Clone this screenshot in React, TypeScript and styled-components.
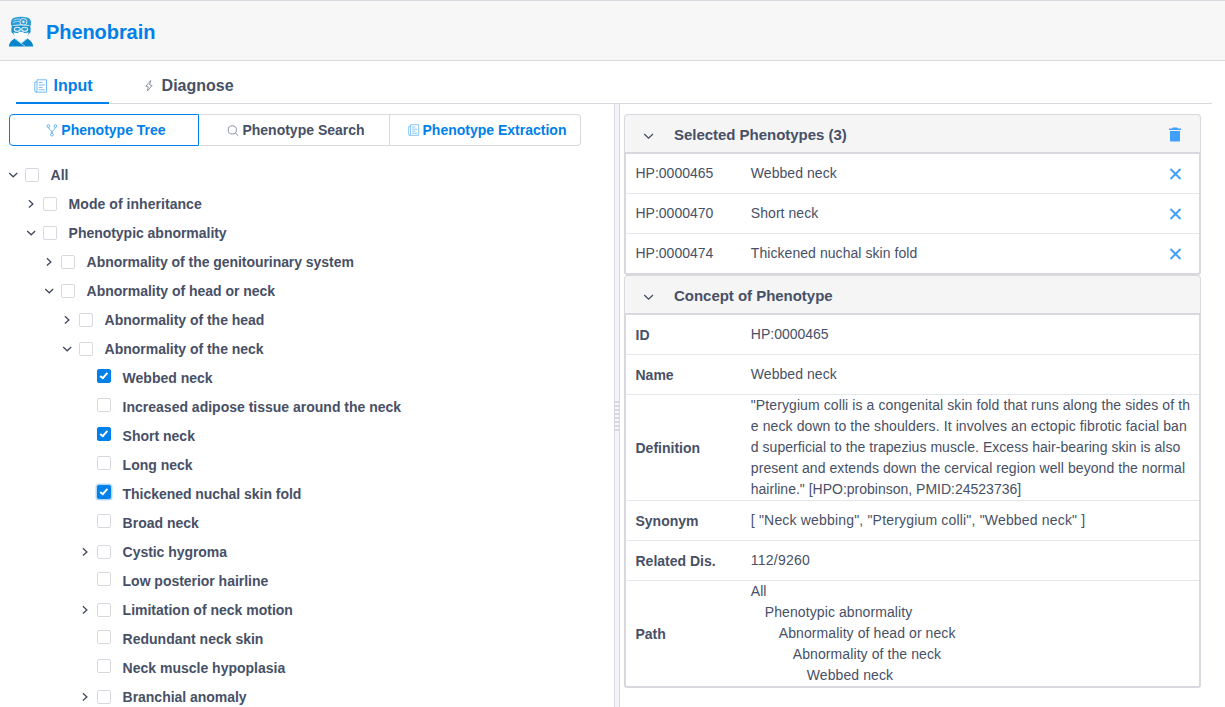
import React from "react";
import styled, { createGlobalStyle, css } from "styled-components";

const ink = "#475066";
const blue = "#0080ea";
const line = "#d8d8de";

const Global = createGlobalStyle`
  * { box-sizing: border-box; }
  body { margin: 0; background: #fff; overflow: hidden; }
`;

const Page = styled.div`
  width: 1225px;
  height: 707px;
  overflow: hidden;
  display: flex;
  flex-direction: column;
  font-family: "Liberation Sans", Arial, sans-serif;
  font-size: 14px;
  line-height: 21px;
  color: ${ink};
`;

const Header = styled.header`
  flex: none;
  height: 61px;
  padding: 2px 0 0 8px;
  display: flex;
  align-items: center;
  gap: 12px;
  background: #f7f7f7;
  border-top: 1px solid ${line};
  border-bottom: 1px solid ${line};
`;

const Brand = styled.h1`
  margin: 0;
  font-size: 20px;
  line-height: 24px;
  font-weight: 700;
  letter-spacing: -0.07px;
  color: ${blue};
`;

const Tabs = styled.nav`
  flex: none;
  display: flex;
  height: 43px;
  margin: 0 13px 0 16px;
  border-bottom: 1px solid ${line};
`;

const Tab = styled.div<{ $active?: boolean }>`
  height: 43px;
  padding: 8px 16.5px 0 17.5px;
  margin-right: 16px;
  display: flex;
  align-items: center;
  gap: 6px;
  font-size: 16px;
  font-weight: 700;
  color: ${(p) => (p.$active ? blue : ink)};
  border-bottom: 2px solid ${(p) => (p.$active ? blue : "transparent")};
`;

const Split = styled.main`
  flex: 1;
  display: flex;
  min-height: 0;
`;

const Left = styled.section`
  width: 614px;
  flex: none;
  padding: 10px 33px 0 9px;
  overflow: hidden;
`;

const Divider = styled.div`
  width: 6px;
  flex: none;
  display: flex;
  flex-direction: column;
  padding-top: 297px;
  background: #f5f5f7;
  border-left: 1px solid ${line};
  border-right: 1px solid ${line};
`;

const Grip = styled.div`
  height: 30px;
  background: repeating-linear-gradient(${line} 0 2px, #f7f7f8 2px 4px);
`;

const Segments = styled.div`
  display: flex;
  height: 32px;
`;

const Segment = styled.div<{ $active?: boolean; $blue?: boolean }>`
  width: 191px;
  padding-left: 4px;
  display: flex;
  align-items: center;
  justify-content: center;
  gap: 3px;
  font-weight: 700;
  color: ${(p) => (p.$active || p.$blue ? blue : ink)};
  border: 1px solid ${line};
  border-left: 0;
  &:last-child { border-radius: 0 4px 4px 0; }
  ${(p) => p.$active && css`
    width: 190px;
    border: 1px solid ${blue};
    border-radius: 4px 0 0 4px;
  `}
`;

const Tree = styled.div`
  padding-top: 14px;
`;

const Row = styled.div<{ $depth: number }>`
  height: 29px;
  display: flex;
  align-items: center;
  padding-left: ${(p) => p.$depth * 18}px;
`;

const Caret = styled.span`
  width: 17px;
  margin-left: -1px;
  display: flex;
  align-items: center;
`;

const Box = styled.span<{ $on?: boolean; $focus?: boolean; $leaf?: boolean }>`
  width: 14px;
  height: 14px;
  margin: ${(p) => (p.$leaf ? "0 11.6px 4px 0" : "0 11.6px 0 0")};
  border: 1px solid ${(p) => (p.$on ? blue : line)};
  border-radius: 2px;
  background: ${(p) => (p.$on ? blue : "#fff")};
  box-shadow: ${(p) => (p.$focus ? "0 0 0 1.5px #b3d9f9" : "none")};
  display: flex;
`;

const Label = styled.span<{ $ls?: number }>`
  font-weight: 700;
  white-space: nowrap;
  letter-spacing: ${(p) => p.$ls ?? 0}px;
  ${Row} & { padding-top: 2px; }
`;

const Right = styled.section`
  flex: 1;
  min-width: 0;
  padding: 10px 24px 0 4px;
`;

const PanelHead = styled.div`
  height: 38px;
  display: flex;
  align-items: center;
  padding: 2px 18px 0 18px;
  background: #f5f5f6;
  border: 1px solid ${line};
  border-bottom: 0;
  border-radius: 4px 4px 0 0;
`;

const PanelTitle = styled.h2`
  flex: 1;
  margin: 0 0 0 19px;
  font-size: 15px;
  line-height: 20px;
  font-weight: 700;
  letter-spacing: -0.03px;
`;

const Table = styled.div`
  border: 2px solid ${line};
  border-radius: 0 0 3px 3px;
`;

const TableRow = styled.div`
  min-height: 39px;
  display: flex;
  align-items: center;
  padding: 0 17px 0 9.5px;
  & + & { border-top: 1px solid #e3e6ea; min-height: 40px; }
`;

const Key = styled.div<{ $bold?: boolean }>`
  width: 115.3px;
  flex: none;
  padding-top: ${(p) => (p.$bold ? "2px" : "0")};
  font-weight: ${(p) => (p.$bold ? 700 : 400)};
`;

const Value = styled.div`
  flex: 1;
  min-width: 0;
  display: flex;
  flex-direction: column;
  letter-spacing: 0.06px;
`;

const TextLine = styled.div<{ $indent?: number; $ls?: number }>`
  white-space: pre;
  padding-left: ${(p) => p.$indent ?? 0}px;
  letter-spacing: ${(p) => p.$ls ?? 0.06}px;
`;

const Chevron = ({ open }: { open: boolean }) => (
  <svg width="12" height="12" viewBox="0 0 12 12" fill="none" stroke="#3f495c" strokeWidth="1.3">
    <path d={open ? "M1.2 4.1 5.2 7.8 9.2 4.1" : "M2.9 2.2 6.9 5.9 2.9 9.6"} />
  </svg>
);

const PanelChevron = () => (
  <svg width="12" height="12" viewBox="0 0 12 12" fill="none" stroke="#3f495c" strokeWidth="1.2">
    <path d="M1.2 5 5.6 9.2 10 5" />
  </svg>
);

const DocIcon = ({ size }: { size: number }) => (
  <svg width={size} height={size} viewBox="0 0 14 14" fill="none" stroke="#66b3f2" strokeWidth="0.9">
    <path d="M3 .8H12.5V13.2H1.9Q.8 13.2 .8 12V3H3M3 .8V12Q3 13.2 1.9 13.2" />
    <path d="M4.8 3.5H8.6M4.8 6H10.8M4.8 8.4H8.6M4.8 10.8H10.8" />
  </svg>
);

const BoltIcon = () => (
  <svg width="13" height="14" viewBox="0 0 13 14" fill="none" stroke="#727b8c" strokeWidth="0.8" strokeLinejoin="round">
    <path d="M7.7 1.5 2.9 7.2 5.3 7.8 4.4 12 9.1 6.5 6.6 5.9Z" />
  </svg>
);

const ForkIcon = () => (
  <svg width="12" height="14" viewBox="0 0 12 14" fill="none" stroke="#5aacf2" strokeWidth="0.9">
    <circle cx="2.4" cy="3.1" r="1.4" />
    <circle cx="9.4" cy="3.1" r="1.4" />
    <circle cx="5.9" cy="11.6" r="1.4" />
    <path d="M2.5 4.5C2.7 7 5.9 6.7 5.9 10.2C5.9 6.7 9.1 7 9.3 4.5" />
  </svg>
);

const SearchIcon = () => (
  <svg width="12" height="14" viewBox="0 0 12 14" fill="none" stroke="#7d8595" strokeWidth="0.9">
    <circle cx="5.3" cy="6.9" r="4.1" />
    <path d="M8.2 9.8 11.3 12.8" />
  </svg>
);

const CloseIcon = () => (
  <svg width="13" height="13" viewBox="0 0 13 13" stroke="#40a0fc" strokeWidth="2">
    <path d="M1.5 2 11.5 12M11.5 2 1.5 12" />
  </svg>
);

const TrashIcon = () => (
  <svg width="14" height="16" viewBox="0 0 14 16" fill="#40a0fc">
    <path d="M1 1.5H4L5 .4H9L10 1.5H13V3H1ZM2 4H12V13.4Q12 14.6 10.8 14.6H3.2Q2 14.6 2 13.4Z" />
  </svg>
);

const Logo = () => (
  <svg width="26" height="31" viewBox="0 0 26 31">
    <path d="M3.2 9.5Q2 3.5 6 1.8Q13 -.2 20 1.8Q24 3.5 22.8 9.5Z" fill="#2b9bd5" />
    <path d="M5.5 4.2Q9 2.6 12 2.9M4.8 6.6Q8.5 5 11.5 5.3" stroke="#a9d8f0" strokeWidth="1" fill="none" />
    <circle cx="15.4" cy="5.9" r="3.5" fill="#2b9bd5" stroke="#d6ecf7" strokeWidth="1" />
    <circle cx="15.4" cy="5.9" r="1.3" fill="#d6ecf7" />
    <path d="M4 9.5H22L22.6 12.5V16L20 19L16 23.5H10L6 19L3.4 16V12.5Z" fill="#1a90ce" />
    <path d="M5 9.6Q13 7.8 21 9.6" stroke="#cbe7f5" strokeWidth="1" fill="none" />
    <ellipse cx="9.3" cy="13.2" rx="3" ry="2" fill="#2b9bd5" stroke="#e7f4fa" strokeWidth="1.1" />
    <ellipse cx="16.7" cy="13.2" rx="3" ry="2" fill="#2b9bd5" stroke="#e7f4fa" strokeWidth="1.1" />
    <path d="M5.2 16.4L9.5 17Q13 14.4 16.5 17L20.8 16.4L18.8 21.5L13 26L7.2 21.5Z" fill="#f9fbfc" />
    <path d="M.8 30.5Q1.2 25.6 6.8 22.6L13 27.2L19.2 22.6Q24.8 25.6 25.2 30.5Z" fill="#0787cb" />
    <path d="M7 22.8 17.5 30.5M19 22.8 13.2 27.4" stroke="#b7def2" strokeWidth=".9" fill="none" />
  </svg>
);

type Node = { d: number; t: string; k?: "open" | "closed"; on?: boolean; focus?: boolean; ls?: number };

const nodes: Node[] = [
  { d: 0, t: "All", k: "open" },
  { d: 1, t: "Mode of inheritance", k: "closed", ls: 0.05 },
  { d: 1, t: "Phenotypic abnormality", k: "open", ls: -0.03 },
  { d: 2, t: "Abnormality of the genitourinary system", k: "closed", ls: -0.05 },
  { d: 2, t: "Abnormality of head or neck", k: "open", ls: -0.02 },
  { d: 3, t: "Abnormality of the head", k: "closed", ls: -0.02 },
  { d: 3, t: "Abnormality of the neck", k: "open", ls: -0.02 },
  { d: 4, t: "Webbed neck", on: true },
  { d: 4, t: "Increased adipose tissue around the neck" },
  { d: 4, t: "Short neck", on: true },
  { d: 4, t: "Long neck" },
  { d: 4, t: "Thickened nuchal skin fold", on: true, focus: true, ls: -0.04 },
  { d: 4, t: "Broad neck" },
  { d: 4, t: "Cystic hygroma", k: "closed", ls: -0.05 },
  { d: 4, t: "Low posterior hairline", ls: -0.03 },
  { d: 4, t: "Limitation of neck motion", k: "closed" },
  { d: 4, t: "Redundant neck skin" },
  { d: 4, t: "Neck muscle hypoplasia" },
  { d: 4, t: "Branchial anomaly", k: "closed", ls: -0.03 },
];

const selected = [
  ["HP:0000465", "Webbed neck"],
  ["HP:0000470", "Short neck"],
  ["HP:0000474", "Thickened nuchal skin fold"],
];

const concept: { key: string; lines: string[]; step?: number; ls?: number[] }[] = [
  { key: "ID", lines: ["HP:0000465"], ls: [0] },
  { key: "Name", lines: ["Webbed neck"] },
  {
    key: "Definition",
    ls: [0.095, 0.1, 0.045, 0.07, 0],
    lines: [
      '"Pterygium colli is a congenital skin fold that runs along the sides of th',
      "e neck down to the shoulders. It involves an ectopic fibrotic facial ban",
      "d superficial to the trapezius muscle. Excess hair-bearing skin is also",
      "present and extends down the cervical region well beyond the normal",
      'hairline." [HPO:probinson, PMID:24523736]',
    ],
  },
  { key: "Synonym", lines: ['[ "Neck webbing", "Pterygium colli", "Webbed neck" ]'], ls: [0.18] },
  { key: "Related Dis.", lines: ["112/9260"], ls: [0.25] },
  {
    key: "Path",
    step: 14,
    ls: [0, 0.09, 0.09, 0.09, 0.09],
    lines: ["All", "Phenotypic abnormality", "Abnormality of head or neck", "Abnormality of the neck", "Webbed neck"],
  },
];

const TreeRow = ({ node }: { node: Node }) => (
  <Row $depth={node.d}>
    <Caret>{node.k && <Chevron open={node.k === "open"} />}</Caret>
    <Box $on={node.on} $focus={node.focus} $leaf={!node.k}>
      {node.on && (
        <svg width="12" height="12" viewBox="0 0 12 12" fill="none" stroke="#fff" strokeWidth="2">
          <path d="M2.2 6 4.8 8.2 9.4 2.8" />
        </svg>
      )}
    </Box>
    <Label $ls={node.ls}>{node.t}</Label>
  </Row>
);

export default function App() {
  return (
    <Page>
      <Global />
      <Header>
        <Logo />
        <Brand>Phenobrain</Brand>
      </Header>
      <Tabs>
        <Tab $active><DocIcon size={14} />Input</Tab>
        <Tab><BoltIcon />Diagnose</Tab>
      </Tabs>
      <Split>
        <Left>
          <Segments>
            <Segment $active><ForkIcon /><Label>Phenotype Tree</Label></Segment>
            <Segment><SearchIcon /><Label>Phenotype Search</Label></Segment>
            <Segment $blue><DocIcon size={12} /><Label>Phenotype Extraction</Label></Segment>
          </Segments>
          <Tree>
            {nodes.map((n) => <TreeRow key={n.t} node={n} />)}
          </Tree>
        </Left>
        <Divider><Grip /></Divider>
        <Right>
          <PanelHead>
            <PanelChevron />
            <PanelTitle>Selected Phenotypes (3)</PanelTitle>
            <TrashIcon />
          </PanelHead>
          <Table>
            {selected.map(([id, name]) => (
              <TableRow key={id}>
                <Key>{id}</Key>
                <Value>{name}</Value>
                <CloseIcon />
              </TableRow>
            ))}
          </Table>
          <PanelHead>
            <PanelChevron />
            <PanelTitle>Concept of Phenotype</PanelTitle>
          </PanelHead>
          <Table>
            {concept.map((c) => (
              <TableRow key={c.key}>
                <Key $bold>{c.key}</Key>
                <Value>
                  {c.lines.map((l, i) => (
                    <TextLine key={l} $indent={(c.step ?? 0) * i} $ls={c.ls?.[i]}>{l}</TextLine>
                  ))}
                </Value>
              </TableRow>
            ))}
          </Table>
        </Right>
      </Split>
    </Page>
  );
}
